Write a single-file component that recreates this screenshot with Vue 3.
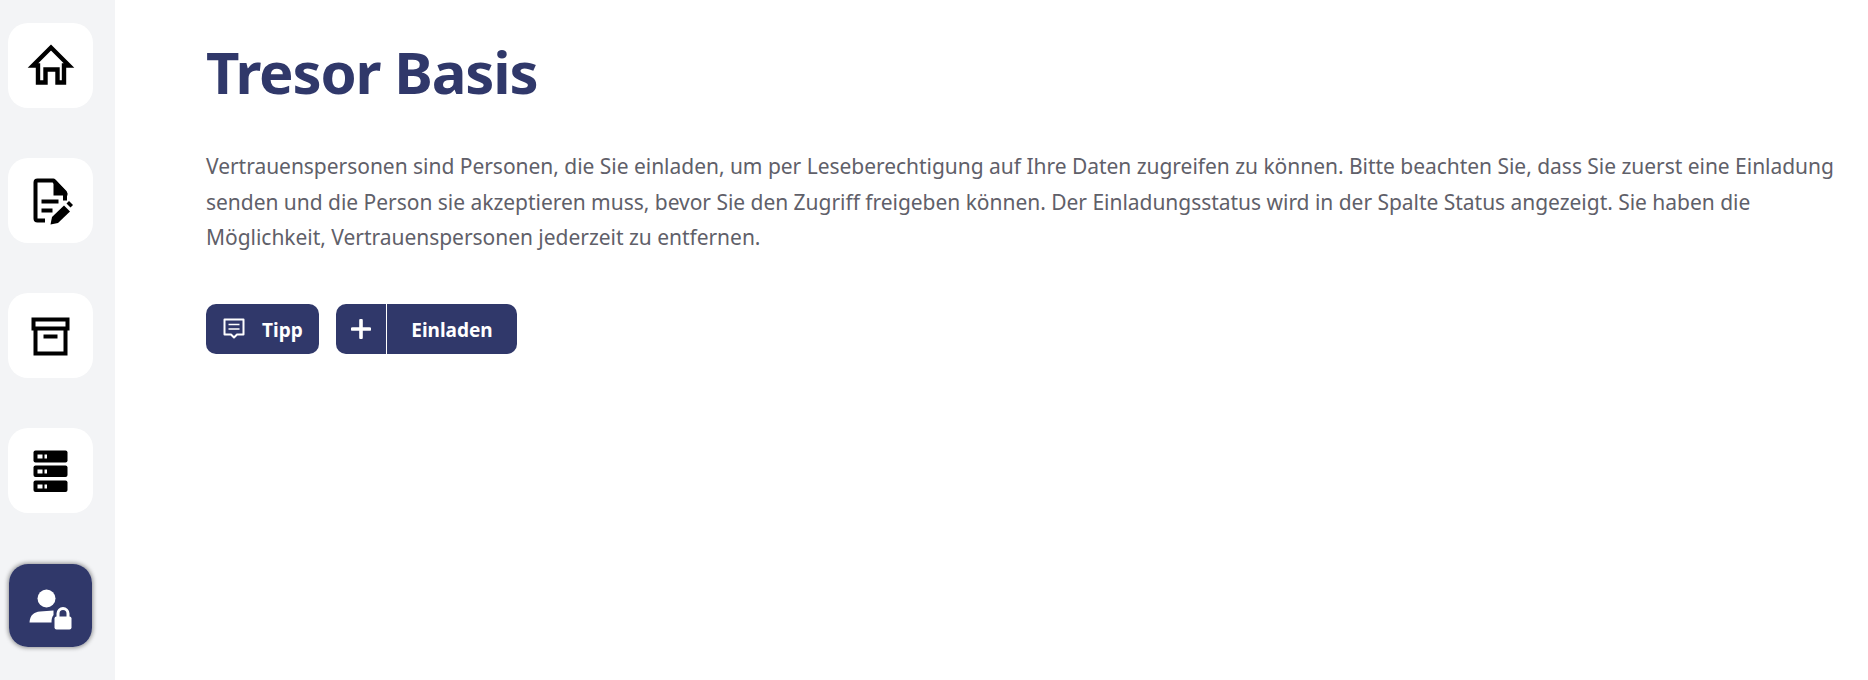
<template>
  <div class="page">
    <aside class="sidebar">
      <button v-for="item in navItems" :key="item.name" class="nav-tile" :class="{ active: item.active }" :aria-label="item.name">
        <svg class="nav-icon" viewBox="0 0 48 48" v-html="item.icon"></svg>
      </button>
    </aside>

    <main class="content">
      <h1>Tresor Basis</h1>
      <p class="intro">
        Vertrauenspersonen sind Personen, die Sie einladen, um per Leseberechtigung auf Ihre Daten zugreifen zu können. Bitte beachten Sie, dass Sie zuerst eine Einladung senden und die Person sie akzeptieren muss, bevor Sie den Zugriff freigeben können. Der Einladungsstatus wird in der Spalte Status angezeigt. Sie haben die Möglichkeit, Vertrauenspersonen jederzeit zu entfernen.
      </p>
      <div class="actions">
        <button class="btn btn-tip">
          <svg class="tip-icon" viewBox="0 0 22 22">
            <path d="M1.500 1.500h19v15h-6.500l-3 3-3-3H1.500z" fill="none" stroke="#fff" stroke-width="2" stroke-linejoin="round" />
            <path d="M5.500 6.500h11M5.500 11h11" stroke="#fff" stroke-width="1.600" />
          </svg>
          <span class="label">Tipp</span>
        </button>
        <button class="btn btn-split">
          <span class="plus">
            <svg viewBox="0 0 20 20"><path d="M10 1.500v17M1.500 10h17" stroke="#fff" stroke-width="3.600" stroke-linecap="round" /></svg>
          </span>
          <span class="label grow">Einladen</span>
        </button>
      </div>
    </main>
  </div>
</template>

<script setup>
// coordinates are in px inside the 48px icon box
const navItems = [
  {
    name: 'Start',
    icon: '<path d="M24 5.500 6 23.500h5V40.500h7.500V27.500h12V40.500H37V23.500h5z" fill="none" stroke="currentColor" stroke-width="4.400"/>'
  },
  {
    name: 'Dokumente',
    icon: '<path d="M18 43.500h-7.500a2 2 0 0 1-2-2V5.500a2 2 0 0 1 2-2h16l11.500 12v8" fill="none" stroke="currentColor" stroke-width="4" stroke-linejoin="round"/><path d="M26.500 3h2l12 13v2.500h-14z" fill="currentColor"/><path d="M14.500 22.500h17v4h-17zM14.500 31.500h11v4h-11z" fill="currentColor"/><path d="m23.500 47.500 1.500-7.500 12-11.500 6 6-12 11.500z" fill="currentColor"/><path d="m39.500 26.500 2.500-2.500 4 4-2.500 2.500z" fill="currentColor"/>'
  },
  {
    name: 'Archiv',
    icon: '<path d="M6.500 7.500h34v9h-34z" fill="none" stroke="currentColor" stroke-width="4"/><path d="M8.500 18v23.500h30V18" fill="none" stroke="currentColor" stroke-width="4"/><path d="M16.500 22.500h14v4h-14z" fill="currentColor"/>'
  },
  {
    name: 'Server',
    icon: '<g fill="currentColor"><rect x="6.500" y="3.500" width="34" height="12" rx="2"/><rect x="6.500" y="18.500" width="34" height="11.500" rx="2"/><rect x="6.500" y="33.500" width="34" height="11.500" rx="2"/></g><path fill="#fff" d="M10.500 7.500h5v4h-5zM17.500 7.500h2.500v4h-2.500zM10.500 22.500h5v4h-5zM17.500 22.500h2.500v4h-2.500zM10.500 37.500h5v4h-5zM17.500 37.500h2.500v4h-2.500z"/>'
  },
  {
    name: 'Vertrauenspersonen',
    active: true,
    icon: '<circle cx="19.500" cy="16.500" r="9" fill="currentColor"/><path d="M2.500 40.500C3 33 7 30 13 29.500l13.500-1V33c-1.500 2-2 4-2 7.500z" fill="currentColor"/><path d="M31 37v-5.500a5 5 0 0 1 10 0V37" fill="none" stroke="currentColor" stroke-width="3"/><rect x="27.500" y="34.500" width="17" height="13" rx="2" fill="currentColor"/>'
  }
]
</script>

<style>
html, body {
  margin: 0;
  background: #fff;
}
</style>

<style scoped>
.page {
  display: flex;
  min-height: 680px;
  font-family: "Noto Sans", "Open Sans", sans-serif;
}

.sidebar {
  width: 115px;
  background: #f3f4f6;
  display: flex;
  flex-direction: column;
  align-items: flex-start;
  padding: 23px 0 0 8px;
  box-sizing: border-box;
  gap: 50px;
}

.nav-tile {
  width: 85px;
  height: 85px;
  box-sizing: border-box;
  border: 1px solid transparent;
  border-radius: 20px;
  background: #fff;
  color: #000;
  padding: 0;
  display: flex;
  align-items: center;
  justify-content: center;
}

.nav-tile.active {
  background: #30386a;
  background-clip: padding-box;
  color: #fff;
  box-shadow: 0 0 4px rgba(0, 0, 0, 0.4);
}

.nav-icon {
  width: 48px;
  height: 48px;
}

.content {
  flex: 1;
  padding: 0 24px 0 91px;
}

h1 {
  margin: 0;
  padding-top: 34px;
  font-size: 58px;
  line-height: 76px;
  font-weight: 700;
  letter-spacing: -1.150px;
  color: #30386a;
}

.intro {
  margin: 39px 0 0;
  font-size: 21px;
  line-height: 35.500px;
  letter-spacing: -0.030px;
  color: #5f6069;
}

.actions {
  display: flex;
  gap: 17px;
  margin-top: 48px;
}

.btn {
  height: 50px;
  border: none;
  border-radius: 10px;
  background: #30386a;
  color: #fff;
  font-family: inherit;
  font-size: 19px;
  font-weight: 700;
  padding: 0;
  display: flex;
  align-items: center;
}

.btn-tip {
  width: 113px;
  padding-left: 17px;
  gap: 17px;
}

.tip-icon {
  width: 22px;
  height: 22px;
}

.btn-split {
  width: 181px;
}

.plus {
  width: 50px;
  height: 100%;
  border-right: 1px solid #fff;
  display: flex;
  align-items: center;
  justify-content: center;
}

.plus svg {
  width: 20px;
  height: 20px;
}

.label {
  padding-top: 2px;
}

.grow {
  flex: 1;
  text-align: center;
}
</style>
